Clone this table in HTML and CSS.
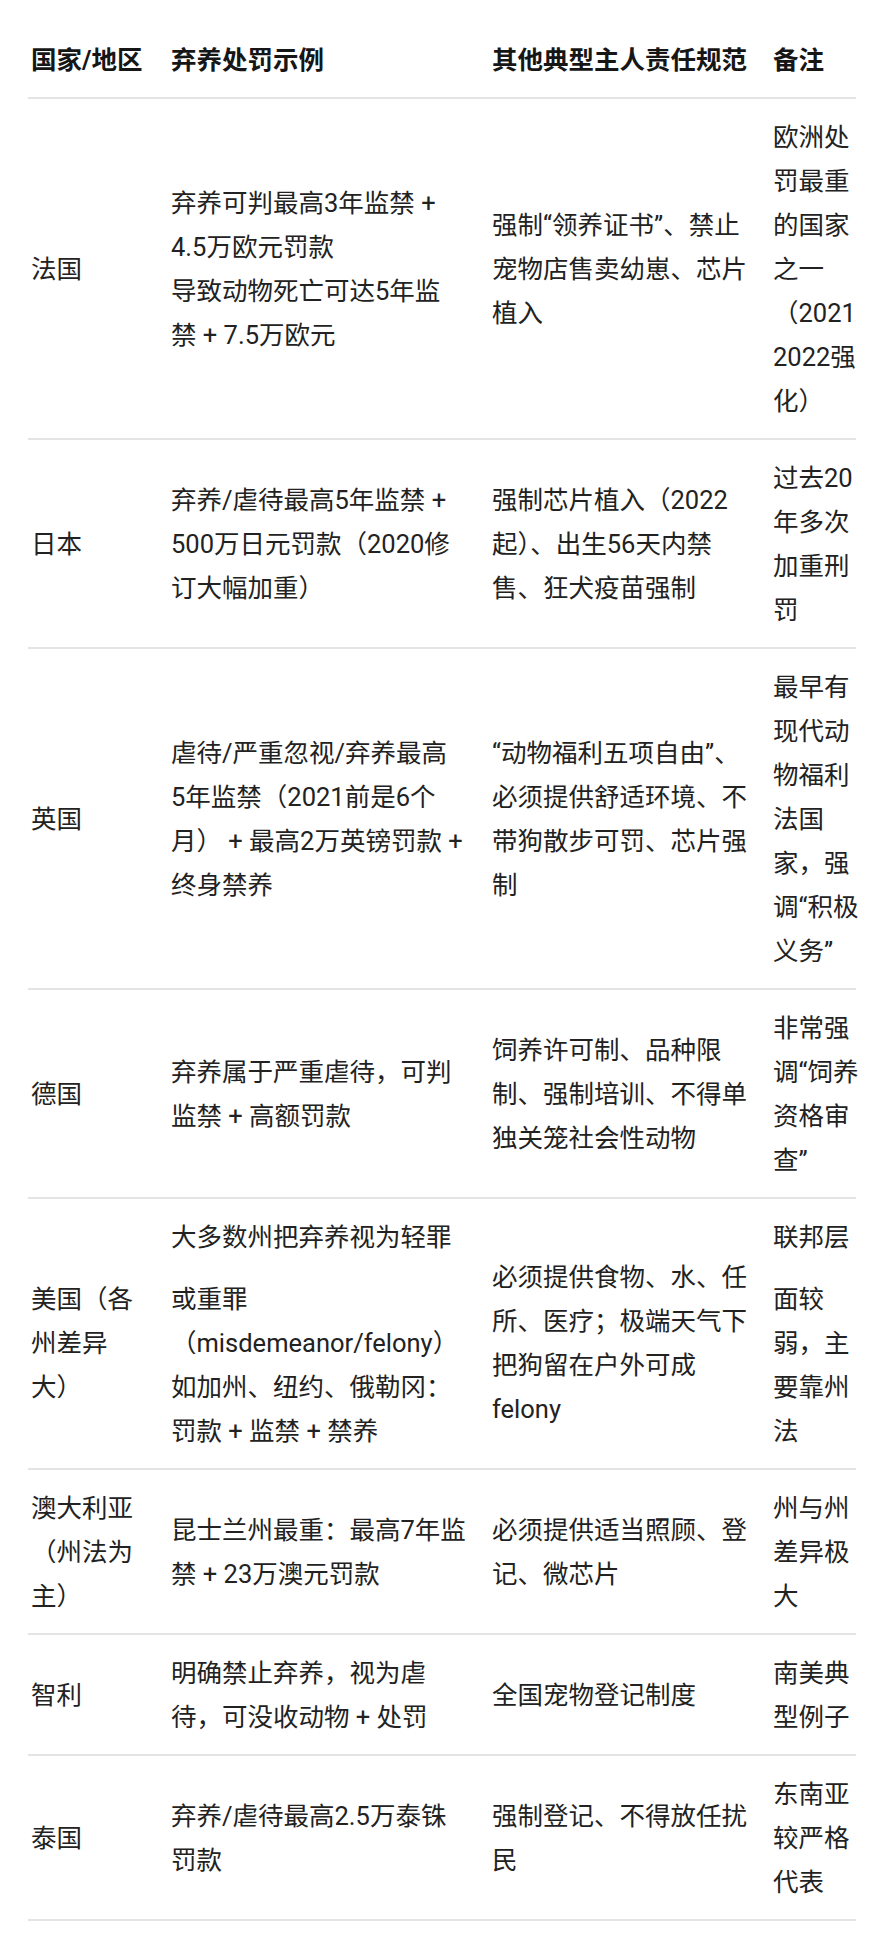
FILE: index.html
```html
<!DOCTYPE html>
<html lang="zh-CN">
<head>
<meta charset="utf-8">
<title>各国弃养处罚对比</title>
<link rel="stylesheet" href="styles.css">
</head>
<body>
<div class="page">
  <table class="law-table">
    <colgroup>
      <col class="c-country">
      <col class="c-penalty">
      <col class="c-duty">
      <col class="c-note">
    </colgroup>
    <thead>
      <tr>
        <th>国家/地区</th>
        <th>弃养处罚示例</th>
        <th>其他典型主人责任规范</th>
        <th>备注</th>
      </tr>
    </thead>
    <tbody>
      <tr>
        <td>法国</td>
        <td>弃养可判最高3年监禁 +<br>4.5万欧元罚款<br>导致动物死亡可达5年监<br>禁 + 7.5万欧元</td>
        <td>强制“领养证书”、禁止<br>宠物店售卖幼崽、芯片<br>植入</td>
        <td>欧洲处<br>罚最重<br>的国家<br>之一<br>（2021<br>2022强<br>化）</td>
      </tr>
      <tr>
        <td>日本</td>
        <td>弃养/虐待最高5年监禁 +<br>500万日元罚款（2020修<br>订大幅加重）</td>
        <td>强制芯片植入（2022<br>起）、出生56天内禁<br>售、狂犬疫苗强制</td>
        <td>过去20<br>年多次<br>加重刑<br>罚</td>
      </tr>
      <tr>
        <td>英国</td>
        <td>虐待/严重忽视/弃养最高<br>5年监禁（2021前是6个<br>月） + 最高2万英镑罚款 +<br>终身禁养</td>
        <td>“动物福利五项自由”、<br>必须提供舒适环境、不<br>带狗散步可罚、芯片强<br>制</td>
        <td>最早有<br>现代动<br>物福利<br>法国<br>家，强<br>调“积极<br>义务”</td>
      </tr>
      <tr>
        <td>德国</td>
        <td>弃养属于严重虐待，可判<br>监禁 + 高额罚款</td>
        <td>饲养许可制、品种限<br>制、强制培训、不得单<br>独关笼社会性动物</td>
        <td>非常强<br>调“饲养<br>资格审<br>查”</td>
      </tr>
      <tr class="row-us">
        <td class="shifted">美国（各<br>州差异<br>大）</td>
        <td><span class="lead-line">大多数州把弃养视为轻罪</span>或重罪<br>（misdemeanor/felony）<br>如加州、纽约、俄勒冈：<br>罚款 + 监禁 + 禁养</td>
        <td class="shifted">必须提供食物、水、任<br>所、医疗；极端天气下<br>把狗留在户外可成<br>felony</td>
        <td><span class="lead-line">联邦层</span>面较<br>弱，主<br>要靠州<br>法</td>
      </tr>
      <tr>
        <td>澳大利亚<br>（州法为<br>主）</td>
        <td>昆士兰州最重：最高7年监<br>禁 + 23万澳元罚款</td>
        <td>必须提供适当照顾、登<br>记、微芯片</td>
        <td>州与州<br>差异极<br>大</td>
      </tr>
      <tr>
        <td>智利</td>
        <td>明确禁止弃养，视为虐<br>待，可没收动物 + 处罚</td>
        <td>全国宠物登记制度</td>
        <td>南美典<br>型例子</td>
      </tr>
      <tr>
        <td>泰国</td>
        <td>弃养/虐待最高2.5万泰铢<br>罚款</td>
        <td>强制登记、不得放任扰<br>民</td>
        <td>东南亚<br>较严格<br>代表</td>
      </tr>
    </tbody>
  </table>
</div>
</body>
</html>
```

FILE: styles.css
```css
html, body {
  margin: 0;
  padding: 0;
  background: #ffffff;
}

body {
  font-family: "Roboto", "Noto Sans CJK SC", sans-serif;
  font-size: 25.5px;
  line-height: 44px;
  color: #222222;
}

.page {
  padding: 22px 28px 0 28px;
}

.law-table {
  width: 828px;
  table-layout: fixed;
  border-collapse: collapse;
}

.c-country { width: 131px; }
.c-penalty { width: 321px; }
.c-duty { width: 281px; }
.c-note { width: 95px; }

.law-table tr {
  border-bottom: 2px solid #e4e4e4;
}

.law-table th,
.law-table td {
  padding: 16px 0 15px 12px;
  text-align: left;
  vertical-align: middle;
  white-space: nowrap;
  overflow: visible;
}

.law-table th:first-child,
.law-table td:first-child {
  padding-left: 3px;
}

.law-table th {
  font-weight: 700;
  color: #161616;
}

.lead-line {
  display: block;
  margin-bottom: 18px;
}

.row-us .shifted {
  padding-top: 34px;
}
```
